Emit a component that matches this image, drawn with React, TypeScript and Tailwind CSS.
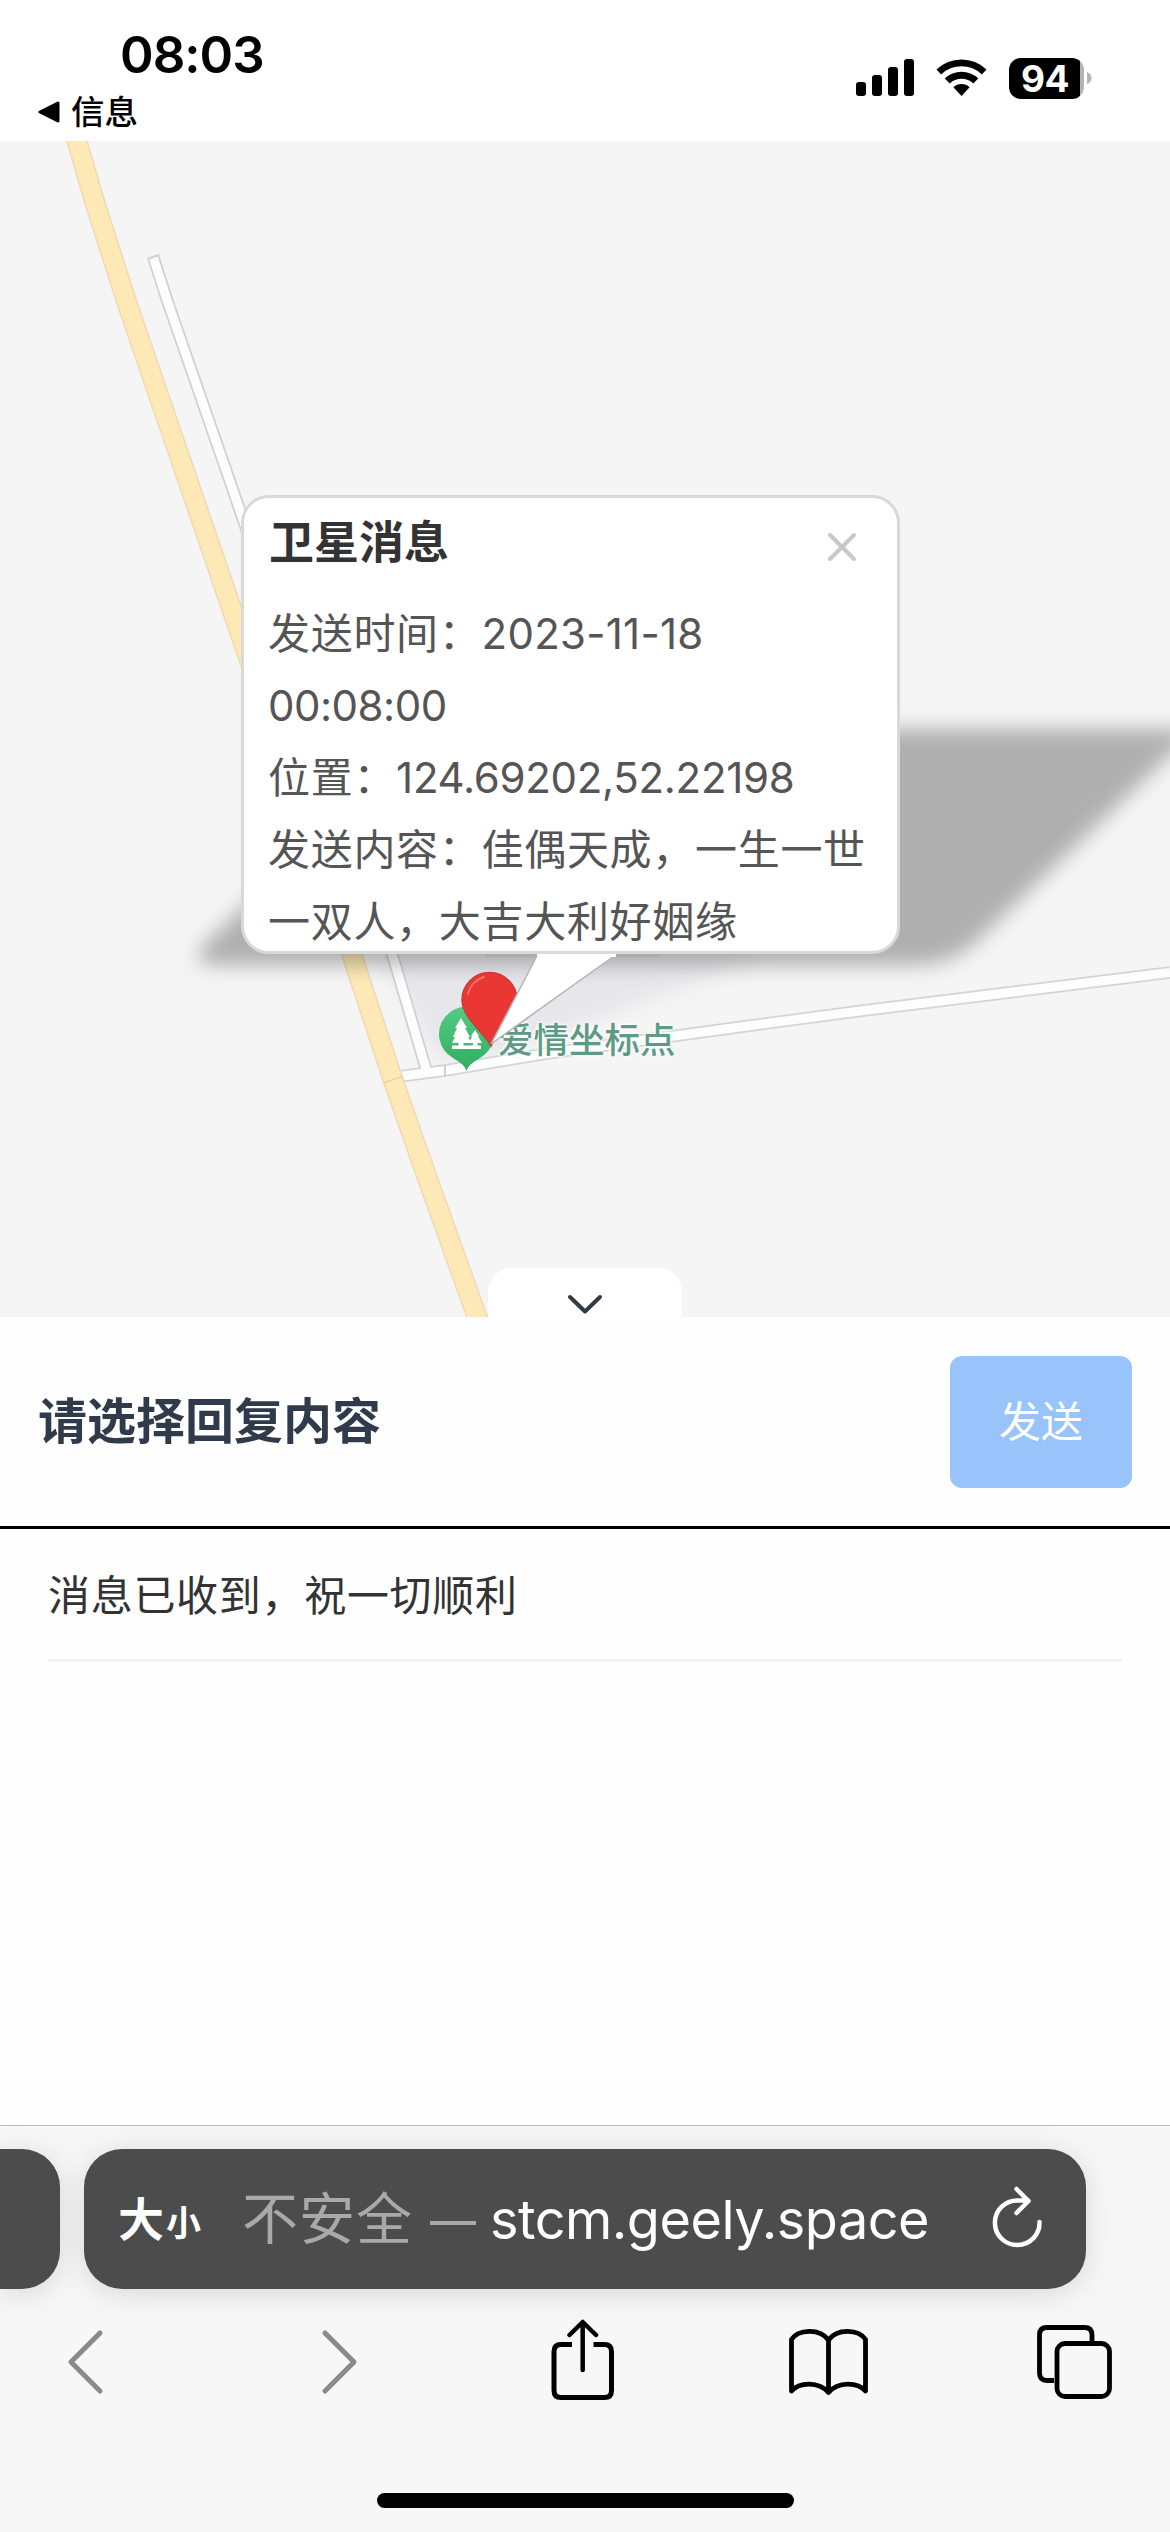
import React from 'react';

const Chevron: React.FC<{ d: string }> = ({ d }) => (
  <svg width="38" height="66" viewBox="0 0 38 66" fill="none" stroke="#8a8a8a" strokeWidth="5" strokeLinecap="round" strokeLinejoin="round">
    <path d={d} />
  </svg>
);

const StatusBar: React.FC = () => (
  <header className="h-[141px] shrink-0 flex justify-between bg-white text-black">
    <div className="pl-[38px] pt-[28px]">
      <div className="pl-[82px] text-[51px] leading-[53px] font-semibold tracking-[-1px]">08:03</div>
      <div className="mt-[12px] flex items-center h-[38px]">
        <svg width="22" height="22" viewBox="0 0 22 22">
          <path d="M2 11 L20 2 V20 Z" stroke="#000" strokeWidth="3" strokeLinejoin="round" />
        </svg>
        <span className="ml-[11px] text-[33.5px] leading-[38px] font-medium">信息</span>
      </div>
    </div>
    <div className="flex items-center h-[42px] mt-[57px] mr-[78px]">
      <svg width="58" height="38" viewBox="0 0 58 38">
        <rect x="0" y="23" width="10" height="14" rx="3" />
        <rect x="16" y="16" width="10" height="21" rx="3" />
        <rect x="32" y="8" width="10" height="29" rx="3" />
        <rect x="48" y="0" width="10" height="37" rx="3" />
      </svg>
      <svg className="ml-[22px]" width="51" height="38" viewBox="0 0 51 38">
        <path d="M0.5 10.5 A36 36 0 0 1 50.5 10.5 L45.8 15.4 A29.3 29.3 0 0 0 5.2 15.4 Z" />
        <path d="M8.8 19.4 A24.5 24.5 0 0 1 42.2 19.4 L37.3 24.4 A17.3 17.3 0 0 0 13.7 24.4 Z" />
        <path d="M17.4 28.2 A12 12 0 0 1 33.6 28.2 L25.5 37 Z" />
      </svg>
      <div className="ml-[22px] w-[75px] h-[41px] rounded-[12px] bg-[linear-gradient(90deg,#000_71px,#b5b5b5_71px)] flex items-center pl-[12px] text-white text-[37px] leading-[41px] font-bold tracking-[-0.5px]">
        94
      </div>
      <svg className="ml-[3px]" width="5" height="14" viewBox="0 0 5 14" fill="#b5b5b5">
        <path d="M0 1 Q4.5 3 4.5 7 Q4.5 11 0 13 Z" />
      </svg>
    </div>
  </header>
);

const MapDrawing: React.FC = () => (
  <svg className="block" width="1170" height="1176" viewBox="0 141 1170 1176">
    <defs>
      <filter id="soft" x="-10%" y="-20%" width="120%" height="140%">
        <feGaussianBlur stdDeviation="10" />
      </filter>
      <linearGradient id="green" x1="0" y1="0" x2="0" y2="1">
        <stop offset="0" stopColor="#55ca83" />
        <stop offset="1" stopColor="#2fae60" />
      </linearGradient>
    </defs>
    <rect y="141" width="1170" height="1176" fill="#f5f5f5" />

    {/* faint shadow around the pointer */}
    <path d="M380 955 H770 L491 1056 L440 1060 Z" fill="#30304a" fillOpacity="0.06" filter="url(#soft)" />

    {/* side roads */}
    <g fill="none" strokeLinejoin="round">
      <path d="M395 1077 L445 1070.5 L550 1053 L740 1027 L860 1011 L1170 972.5" stroke="#d4d4d6" strokeWidth="12.5" />
      <path d="M153 256 L167 300 L226 470 L392.5 955 L428 1076" stroke="#d0d0d2" strokeWidth="12.5" />
      <path d="M395 1077 L445 1070.5 L550 1053 L740 1027 L860 1011 L1170 972.5" stroke="#fdfdfd" strokeWidth="9" />
      <path d="M153.5 258 L167 300 L226 470 L392.5 955 L427.5 1074" stroke="#fdfdfd" strokeWidth="9" />
      <path d="M445 1065 V1076" stroke="#c0c0c4" strokeWidth="1.5" />
    </g>

    {/* main road */}
    <g fill="none">
      <path d="M74 131 L77 141 L95 203 L126 300 L241 636 L352 955 L393 1080 L428 1180 L480 1325" stroke="#f0d9b4" strokeWidth="21" />
      <path d="M74 131 L77 141 L95 203 L126 300 L241 636 L352 955 L393 1080 L428 1180 L480 1325" stroke="#fce9b6" strokeWidth="18" />
      <path d="M384 1083 L403 1076" stroke="#f0cf9e" strokeWidth="1.5" />
    </g>

    {/* slanted shadow thrown by the info window */}
    <path d="M430 729 H1197 L982 936 Q955 965 915 965 H218 Q186 965 206 943 Z" fill="#000" fillOpacity="0.285" filter="url(#soft)" />
    <path d="M486 950 H660 V957 H486 Z" fill="#acacac" />

    {/* park marker */}
    <path d="M466.500 1071 C464 1064 459 1062 453 1058 A27.500 27.500 0 1 1 480 1058 C474 1062 469 1064 466.500 1071 Z" fill="url(#green)" />
    <g fill="#fff">
      <path d="M461 1018 L467 1028 H465 L470 1037 H468 L472 1043 H463.500 V1045.500 H473 V1049 H452 V1045.500 H458.500 V1043 H452 L455 1037 H453 L457 1028 H455 Z" />
      <path d="M475 1030 L479 1036 H478 L482 1043 H477.500 V1045.500 H481 V1049 H470 V1045.500 H473 V1043 H469.500 L472 1036 H471 Z" />
    </g>

    {/* red pin */}
    <path d="M491 1046 C486 1034 462 1018 462 1000 A27.500 27.500 0 0 1 517 1000 C517 1018 496 1034 491 1046 Z" fill="#ea3733" stroke="#c93a3e" strokeWidth="1.500" />
    <path d="M468 994 A23 23 0 0 1 484 977" fill="none" stroke="#f26f69" strokeWidth="2" strokeLinecap="round" />
  </svg>
);

const InfoWindow: React.FC = () => (
  <div className="absolute left-[241px] top-[354px] w-[659px] h-[459px] rounded-[28px] border-[3px] border-[#d9d9d9] bg-white">
    <div className="flex items-start justify-between pl-[25px] pr-[40px] pt-[13px]">
      <h2 className="text-[45px] leading-[64px] font-bold text-[#333]">卫星消息</h2>
      <svg className="mt-[21px]" width="30" height="30" viewBox="0 0 30 30" stroke="#c8c8c8" strokeWidth="4" strokeLinecap="round">
        <path d="M3 3 L27 27 M27 3 L3 27" />
      </svg>
    </div>
    <div className="pl-[24px] pt-[23px] text-[42px] leading-[72px] tracking-[0.7px] text-[#555] whitespace-nowrap">
      <p>发送时间：<span className="tracking-[0.25px]">2023-11-18</span></p>
      <p><span className="tracking-[-0.5px]">00:08:00</span></p>
      <p>位置：<span className="tracking-[-0.3px]">124.69202,52.22198</span></p>
      <p>发送内容：佳偶天成，一生一世</p>
      <p>一双人，大吉大利好姻缘</p>
    </div>
  </div>
);

const MapView: React.FC = () => (
  <section className="relative h-[1176px] shrink-0 overflow-hidden">
    <MapDrawing />
    <span className="absolute left-[498px] top-[875px] text-[35.500px] leading-[50px] font-medium text-[#5f9b84] whitespace-nowrap [text-shadow:0_0_3px_#fff,0_0_3px_#fff,0_0_4px_#fff]">爱情坐标点</span>
    <InfoWindow />
    {/* pointer from the window to the pin */}
    <svg className="absolute left-[480px] top-[806px]" width="150" height="110" viewBox="480 947 150 110">
      <path d="M538 954 L491 1044 L614 956" fill="#fff" stroke="#b4b4b4" strokeWidth="1.500" />
      <rect x="537" y="948" width="79" height="9" fill="#fff" />
      <rect x="530" y="951" width="92" height="3" fill="#d9d9d9" />
    </svg>
    <button className="absolute left-[488px] bottom-0 w-[194px] h-[49px] rounded-t-[24px] bg-white flex justify-center pt-[25px]">
      <svg width="38" height="22" viewBox="0 0 38 22" fill="none" stroke="#333a44" strokeWidth="4" strokeLinecap="round" strokeLinejoin="round">
        <path d="M4 4 L19 18.500 L34 4" />
      </svg>
    </button>
  </section>
);

const ReplyPanel: React.FC = () => (
  <section className="h-[808px] shrink-0 bg-[#fefefe]">
    <div className="h-[212px] flex items-center justify-between pl-[38px] pr-[38px] border-b-[3px] border-black">
      <h1 className="text-[49px] leading-[70px] font-bold text-[#2f3b4b]">请选择回复内容</h1>
      <button className="w-[182px] h-[132px] rounded-[12px] bg-[#98c4fb] text-white text-[42px]">发送</button>
    </div>
    <div className="mx-[48px] h-[133px] pt-[3px] flex items-center border-b-[3px] border-[#f3f3f3] text-[42px] tracking-[0.700px] text-[#333]">
      消息已收到，祝一切顺利
    </div>
  </section>
);

const BrowserBar: React.FC = () => (
  <footer className="h-[407px] shrink-0 bg-[#f7f7f7] border-t border-[#bdbdbd] overflow-hidden">
    <div className="flex pt-[23px] gap-[24px]">
      <div className="w-[60px] h-[140px] rounded-r-[38px] bg-[#4c4c4c] shadow-[0_4px_30px_rgba(0,0,0,0.13)]" />
      <div className="w-[1002px] h-[140px] rounded-[38px] bg-[#4c4c4c] shadow-[0_4px_30px_rgba(0,0,0,0.13)] flex items-center text-white whitespace-nowrap">
        <div className="w-[158px] pl-[34px] flex items-baseline gap-[2px]">
          <span className="text-[46px] font-bold">大</span>
          <span className="text-[35px] font-bold">小</span>
        </div>
        <span className="w-[173px] text-[56px] tracking-[1px] text-[#a9a9a9]">不安全</span>
        <span className="w-[46px] h-[4px] ml-[15px] mt-[8px] bg-[#a9a9a9] text-transparent text-[1px]">—</span>
        <span className="ml-[14px] w-[440px] text-[54px] tracking-[-0.500px]">stcm.geely.space</span>
        <svg className="ml-[59px] mb-[5px]" width="56" height="68" viewBox="988 2182 56 68" fill="none" stroke="#fff" strokeWidth="4.500" strokeLinecap="round" strokeLinejoin="round">
          <path d="M1038.500 2221 A22.300 22.300 0 1 1 1016.500 2199.500 H1027" />
          <path d="M1015.500 2188 L1027.500 2200 L1015.500 2212" />
        </svg>
      </div>
    </div>
    <div className="mt-[27px] h-[92px] flex items-center pl-[66px]">
      <Chevron d="M34 4 L5 33 L34 62" />
      <div className="ml-[217px]">
        <Chevron d="M4 4 L33 33 L4 62" />
      </div>
      <svg className="ml-[190px]" width="68" height="86" viewBox="549 2319 68 86" fill="none" stroke="#000" strokeWidth="5" strokeLinecap="round" strokeLinejoin="round">
        <path d="M572 2344.500 H561 Q554 2344.500 554 2351.500 V2390.500 Q554 2397.500 561 2397.500 H604.500 Q611.500 2397.500 611.500 2390.500 V2351.500 Q611.500 2344.500 604.500 2344.500 H593.500" strokeLinecap="butt" />
        <path d="M582.700 2370 V2323 M569.500 2335 L582.700 2322 L596 2335" strokeWidth="4.500" />
      </svg>
      <svg className="ml-[168px]" width="86" height="72" viewBox="785 2326 86 72" fill="none" stroke="#000" strokeWidth="4.800" strokeLinecap="round" strokeLinejoin="round">
        <path d="M828.500 2340 C820 2328 798 2329 791.500 2339.500 V2391 C799 2382 819 2381 828.500 2392.500 C838 2381 858 2382 865.500 2391 V2339.500 C859 2329 837 2328 828.500 2340 Z M828.500 2340 V2392" />
      </svg>
      <svg className="ml-[164px]" width="80" height="80" viewBox="1035 2322 80 80" fill="none" stroke="#000" strokeWidth="4.800">
        <path d="M1054 2380.500 H1047 Q1039.500 2380.500 1039.500 2373 V2335 Q1039.500 2327.500 1047 2327.500 H1084.500 Q1092 2327.500 1092 2335 V2342" />
        <rect x="1057" y="2343.500" width="52.500" height="53" rx="8" />
      </svg>
    </div>
    <div className="mt-[85px] mx-auto w-[417px] h-[15px] rounded-full bg-black" />
  </footer>
);

export default function App() {
  return (
    <div className="w-[1170px] h-[2532px] flex flex-col overflow-hidden font-['Inter','Noto_Sans_CJK_SC',sans-serif]">
      <StatusBar />
      <MapView />
      <ReplyPanel />
      <BrowserBar />
    </div>
  );
}
